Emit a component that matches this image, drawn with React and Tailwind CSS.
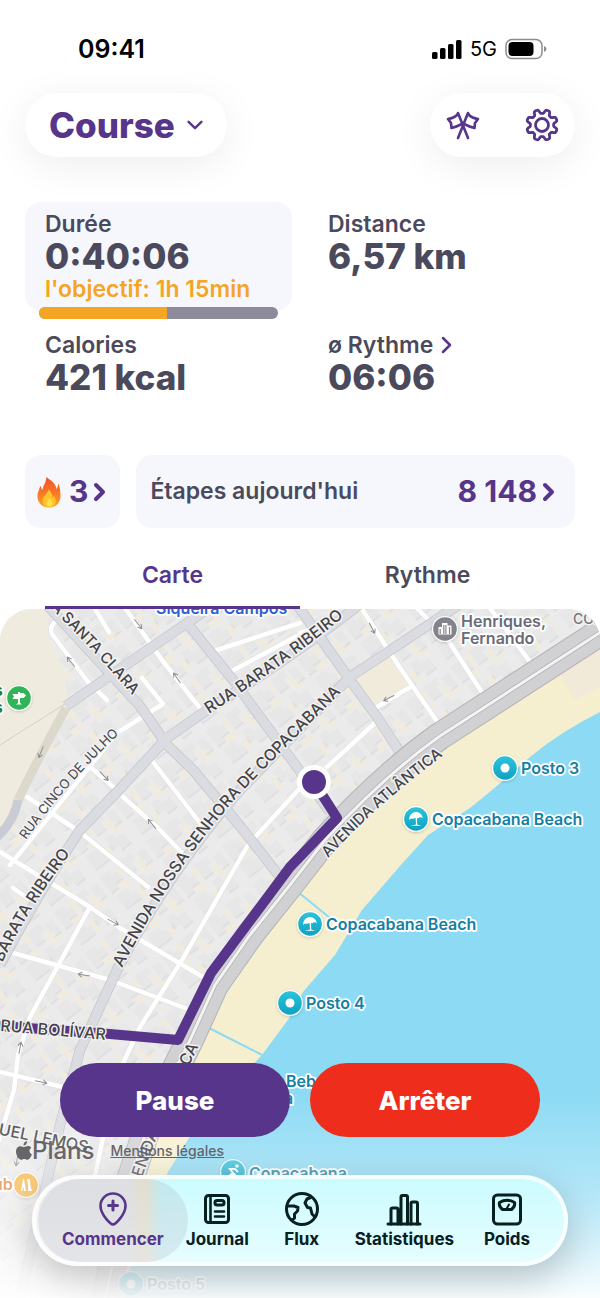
import { useState } from "react";

const STATUS_BARS = [7, 11, 15, 19];

const NAV_ITEMS = [
  { id: "start", label: "Commencer", Icon: PinIcon },
  { id: "journal", label: "Journal", Icon: JournalIcon },
  { id: "feed", label: "Flux", Icon: GlobeIcon },
  { id: "stats", label: "Statistiques", Icon: ChartIcon },
  { id: "weight", label: "Poids", Icon: ScaleIcon },
];

const MAIN_ROADS = [
  "M66 706 L187 623 L215 604",
  "M187 623 L233 680 L297 767 L330 812",
  "M360 604 Q300 652 207 710 L167 738 L117 792 L80 830 Q40 890 0 965",
  "M48 606 L140 706 L167 745 L193 770 L240 826 L280 877",
  "M460 604 L350 677 L240 790 Q170 870 117 970 L80 1050 L60 1125 L20 1298",
  "M298 606 L350 680 L377 717 L405 760",
];

const SIDE_ROADS = [
  "M92 604 L109 632",
  "M125 608 L162 660 L203 712",
  "M62 618 Q48 624 52 634 L88 682 L107 700",
  "M142 678 L163 704 L117 733 L10 865",
  "M300 623 L217 650",
  "M300 633 L310 629 L232 671",
  "M153 762 L200 823",
  "M123 797 L157 827 L182 853",
  "M90 767 L117 790",
  "M27 797 L80 832 L148 887",
  "M360 606 L400 668 L443 730",
  "M413 604 L448 640 L483 694",
  "M487 604 L530 662",
  "M412 686 L372 710",
  "M375 723 L327 767",
  "M300 788 L248 845 L182 960 L140 1027 L115 1080 L90 1200",
  "M0 852 L90 907 L120 928 L203 977",
  "M13 953 L110 980 L185 1008",
  "M90 907 L30 1017 L18 1055 L14 1090 L-4 1150",
  "M0 1072 L63 1087 L120 1098",
  "M13 888 L30 900",
];

const ARROWS = [
  [71, 662, -128], [138, 624, 52], [177, 678, -125], [372, 628, 62], [389, 698, 153],
  [41, 752, 112], [104, 776, 48], [152, 824, -130], [113, 922, 28], [84, 975, 190], [20, 1048, -80], [41, 1082, 12], [17, 1160, 100],
];

const ATLANTICA = "M610 626 L440 736 Q385 775 325 840 L290 885 L250 935 L215 985 L190 1040 L150 1120 L130 1180 L105 1300";

const STREET_LABELS = [
  { id: "santa", d: "M46 604 Q95 650 150 716", text: "A SANTA CLARA", size: 15, offset: 6 },
  { id: "barata", d: "M209 714 Q290 662 362 602", text: "RUA BARATA RIBEIRO", size: 16, offset: 0 },
  { id: "nossa", d: "M122 968 Q175 865 240 794 Q290 742 366 668", text: "AVENIDA NOSSA SENHORA DE COPACABANA", size: 16, offset: 0 },
  { id: "julho", d: "M26 840 Q70 778 136 718", text: "RUA CINCO DE JULHO", size: 13, offset: 0 },
  { id: "barata2", d: "M-18 1010 Q20 910 90 830", text: "RUA BARATA RIBEIRO", size: 16, offset: 14 },
  { id: "atl", d: "M328 858 Q382 798 470 736", text: "AVENIDA ATLÂNTICA", size: 15, offset: 0 },
  { id: "atl2", d: "M134 1204 Q158 1120 216 1014", text: "AVENIDA ATLÂNTICA", size: 16, offset: 6 },
  { id: "bolivar", d: "M0 1031 L130 1042", text: "RUA BOLÍVAR", size: 16, offset: 0 },
  { id: "lemos", d: "M-36 1128 Q40 1142 120 1160", text: "MIGUEL LEMOS", size: 16, offset: 4 },
];

// Eight rounded teeth, with a notch at the top.
const GEAR_PATH = Array.from({ length: 121 }, (_, i) => {
  const a = (i / 120) * Math.PI * 2;
  const r = 13.6 + 2 * Math.tanh(2.2 * -Math.cos(8 * a));
  const x = (18 + r * Math.sin(a)).toFixed(2);
  const y = (18 - r * Math.cos(a)).toFixed(2);
  return `${i ? "L" : "M"}${x} ${y}`;
}).join(" ") + "Z";

function Chevron({ className, dir = "right", width = 3 }) {
  return (
    <svg viewBox={dir === "down" ? "0 0 20 20" : "2 0 16 20"} className={className} fill="none" stroke="currentColor" strokeWidth={width} strokeLinecap="round" strokeLinejoin="round" aria-hidden="true">
      <path d={dir === "down" ? "M2 6 L10 14 L18 6" : "M6 3 L13 10 L6 17"} />
    </svg>
  );
}

function FlagsIcon() {
  return (
    <svg viewBox="0 0 36 32" className="h-8 w-9" fill="none" stroke="currentColor" strokeWidth="2.6" strokeLinecap="round" strokeLinejoin="round" aria-hidden="true">
      <path d="M23 29 L13 4 L12 6 Q9 9 3 10 L6 14 L6.500 19 Q11 18 17 15" />
      <path d="M13 29 L23 4 L24 6 Q27 9 33 10 L30 14 L29.500 19 Q25 18 19 15" />
    </svg>
  );
}

function GearIcon() {
  return (
    <svg viewBox="0 0 36 36" className="h-9 w-9" fill="none" stroke="currentColor" strokeWidth="2.800" strokeLinejoin="round" aria-hidden="true">
      <path d={GEAR_PATH} />
      <circle cx="18" cy="18" r="6.500" />
    </svg>
  );
}

function FlameIcon() {
  return (
    <svg viewBox="0 0 24 32" className="h-8 w-6" aria-hidden="true">
      <defs>
        <linearGradient id="flame" x1="0" y1="0" x2="0" y2="1">
          <stop offset="0" stopColor="#f4502a" />
          <stop offset="0.55" stopColor="#f97a26" />
          <stop offset="1" stopColor="#fba62a" />
        </linearGradient>
      </defs>
      <path fill="url(#flame)" d="M9.500 1 C9 5 8 7.500 6.500 10 C6 12 5.500 13 5 14 C4.500 12 3.800 10.500 3 9.800 C3 13 .5 15.500 .5 20.500 C.5 27 5.500 31.500 12 31.500 C18.500 31.500 23.500 27 23.500 20 C23.500 14 22.500 10.500 21.500 7.500 C21 10 20.500 11.500 19.500 13 C18.500 6.500 14 5 9.500 1Z" />
      <path fill="#fdc52c" d="M11.500 13.500 C11.500 17 7 18.500 6 23 C4.800 28 8 31 12.200 31 C17 31 19.500 27.500 18.500 23.500 C18 21.500 17.500 21 17.200 19.500 C16.500 20.500 16.200 21.500 15.500 22 C15.500 18.500 14 15.500 11.500 13.500Z" />
      <path fill="#fde24a" d="M12.500 22 C11.500 24.500 9.500 25 9.500 27.500 C9.500 29.500 10.800 30.500 12.500 30.500 C14.500 30.500 15.500 29 15.200 27 C15 25 13.500 24 12.500 22Z" />
    </svg>
  );
}

function NavSvg({ children }) {
  return (
    <svg viewBox="0 0 36 36" className="h-9 w-9" fill="none" stroke="currentColor" strokeWidth="3" strokeLinecap="round" strokeLinejoin="round" aria-hidden="true">
      {children}
    </svg>
  );
}

function PinIcon() {
  return (
    <NavSvg>
      <path strokeWidth="2.600" d="M18 33.500 C16 33.500 5.500 24 5.500 14.800 A12.500 12.300 0 0 1 30.500 14.800 C30.500 24 20 33.500 18 33.500Z" />
      <path d="M18 10 V19 M13.500 14.500 H22.500" />
    </NavSvg>
  );
}

function JournalIcon() {
  return (
    <NavSvg>
      <rect x="6.500" y="4.500" width="23" height="27" rx="3" />
      <path strokeWidth="2.600" d="M11.500 5 V31" />
      <rect x="16" y="9.500" width="9" height="4.500" rx="2" />
      <path strokeWidth="2.600" d="M16 20.500 H25 M16 25.500 H25" />
    </NavSvg>
  );
}

function GlobeIcon() {
  return (
    <NavSvg>
      <circle cx="18" cy="18" r="15.500" />
      <path d="M3.500 15 H10 L14 16.500 L13.500 20 L10.500 23 L10.500 27 L8 29" />
      <path d="M26.500 6.500 L23 8 L21 12 L23.500 16.500 L26.500 17 L28 23 L30.500 25.500" />
    </NavSvg>
  );
}

function ChartIcon() {
  return (
    <NavSvg>
      <path d="M2 33 H34" />
      <path d="M5 33 V18.500 Q5 17 6.500 17 H10.500 Q12 17 12 18.500 V33 M15 33 V6 Q15 4.500 16.500 4.500 H20 Q21.500 4.500 21.500 6 V33 M25 33 V12.500 Q25 11 26.500 11 H30 Q31.500 11 31.500 12.500 V33" />
    </NavSvg>
  );
}

function ScaleIcon() {
  return (
    <NavSvg>
      <rect x="4.500" y="4" width="27" height="29" rx="4" />
      <path d="M13.500 18.500 Q9.500 15 10.500 11.500 Q18 7 25.500 11.500 Q26.500 15 22.500 18.500Z" />
      <path strokeWidth="2" d="M18 17 L20 13.500" />
    </NavSvg>
  );
}

function StatusBar() {
  return (
    <div className="flex items-center justify-between pt-[33px] pb-7 pl-[78px] pr-[53px] leading-8 text-black">
      <span className="text-[25px] font-semibold">09:41</span>
      <div className="flex items-center gap-2">
        <svg viewBox="0 0 30 20" className="h-5 w-[30px]" aria-hidden="true">
          {STATUS_BARS.map((h, i) => (
            <rect key={h} x={i * 8} y={20 - h} width="5.500" height={h} rx="1.500" />
          ))}
        </svg>
        <span className="text-xl">5G</span>
        <svg viewBox="0 0 42 22" className="h-[22px] w-[42px]" aria-hidden="true">
          <rect x="1" y="1.500" width="36" height="19" rx="6" fill="none" stroke="#8c8c8c" strokeWidth="1.500" />
          <rect x="3.500" y="4" width="25" height="14" rx="4" />
          <path d="M39 8 Q41.500 9 41.500 11 Q41.500 13 39 14Z" fill="#8c8c8c" />
        </svg>
      </div>
    </div>
  );
}

function Stat({ label, value, children }) {
  return (
    <div className="px-5 pt-2">
      <p className="text-[23px] leading-7 font-semibold">{label}</p>
      <p className="text-[35px] leading-[37px] font-extrabold">{value}</p>
      {children}
    </div>
  );
}

function UmbrellaGlyph() {
  return (
    <g fill="#fff">
      <path d="M-7 0 Q-6 -6.500 0 -7 Q6 -6.500 7 0 Q4.500 -2 2.500 -.5 Q0 -2 -2.500 -.5 Q-5 -2 -7 0Z" transform="rotate(-8)" />
      <path d="M-.5 -3 L1 -3 L1.200 5.500 L5.500 6.800 H-5.500 L0 5.500Z" />
    </g>
  );
}

function Pin({ x, y, fill = "url(#pinBlue)", children }) {
  return (
    <g transform={`translate(${x} ${y})`}>
      <circle r="13" fill="#fff" fillOpacity="0.9" filter="url(#soft)" />
      <circle r="11.800" fill={fill} />
      {children}
    </g>
  );
}

function RouteMap() {
  return (
    <svg viewBox="0 609 600 689" preserveAspectRatio="xMidYMin slice" className="absolute inset-0 h-full w-full" role="img" aria-label="Carte du parcours">
      <defs>
        <linearGradient id="pinBlue" x1="0" y1="0" x2="0" y2="1">
          <stop offset="0" stopColor="#2cc3dc" />
          <stop offset="1" stopColor="#0ea2c2" />
        </linearGradient>
        <filter id="soft" x="-40%" y="-40%" width="180%" height="180%">
          <feDropShadow dx="0" dy="1" stdDeviation="1.500" floodOpacity="0.2" />
        </filter>
        <pattern id="blocks" width="58" height="50" patternUnits="userSpaceOnUse" patternTransform="rotate(-38)">
          <path fill="#e7e7e8" d="M2 3 h12 v5 h6 v10 h-9 v5 h-9Z M26 2 h16 v8 h-5 v9 h-11Z M46 6 h9 v16 h-6 v-5 h-3Z M4 28 h14 v7 h5 v10 h-19Z M30 26 h9 v6 h10 v13 h-12 v-5 h-7Z" />
          <path fill="#f0ebdd" d="M20 3 h5 v11 h-5Z M12 20 h12 v6 h-12Z M40 12 h5 v10 h8 v4 h-13Z M24 33 h5 v12 h-5Z" />
          <path fill="none" stroke="#cfcfd2" strokeWidth="0.700" d="M2 23 h9 M11 18 h9 M26 19 h11 M46 22 h9 M4 45 h19 M37 45 h12 M30 40 v-6" />
        </pattern>
      </defs>

      {/* Land, park and buildings */}
      <rect y="560" width="600" height="800" fill="#ebebeb" />
      <rect y="560" width="600" height="800" fill="url(#blocks)" />
      <path fill="#efecdf" d="M0 600 H52 L46 630 L64 672 L68 702 L18 806 L0 830Z" />
      <path fill="none" stroke="#d5d0c0" strokeWidth="1" d="M0 745 L68 702" />
      <path fill="none" stroke="#dcd9cc" strokeWidth="9" d="M66 708 Q40 755 18 800" />
      <path fill="none" stroke="#c9ccd4" strokeWidth="9" d="M18 800 Q14 822 -4 838" />
      <path fill="#f0ebda" d="M352 681 L391 656 L410 685 L374 706Z" />

      {/* Streets */}
      <g fill="none" strokeLinejoin="round">
        <g stroke="#dfdfe2" strokeWidth="5.500">
          {SIDE_ROADS.map((d) => <path key={d} d={d} />)}
        </g>
        <g stroke="#ffffff" strokeWidth="4.500" strokeLinecap="round">
          {SIDE_ROADS.map((d) => <path key={d} d={d} />)}
        </g>
        <g stroke="#c3c5cb" strokeWidth="10.500">
          {MAIN_ROADS.map((d) => <path key={d} d={d} />)}
        </g>
        <g stroke="#dadce1" strokeWidth="9">
          {MAIN_ROADS.map((d) => <path key={d} d={d} />)}
        </g>
        <g stroke="#8e8e92" strokeWidth="1">
          {ARROWS.map(([x, y, a]) => (
            <path key={`${x}-${y}`} transform={`translate(${x} ${y}) rotate(${a})`} d="M-6 0 H6 M2 -2.500 L6 0 L2 2.500" />
          ))}
        </g>
      </g>

      {/* Beach and sea */}
      <path fill="#f6efcf" d="M610 634 L447 743 L385 795 L300 890 L227 993 L200 1047 L150 1130 L128 1200 L108 1300 H610Z" />
      <path fill="#f1ead9" d="M610 636 L545 675 L558 672 L575 700 L610 682Z" />
      <path fill="#8cdaf4" d="M610 706 L600 712 Q560 732 530 757 Q500 784 470 808 L428 835 L400 866 L362 910 L335 955 L303 992 L290 1017 L262 1055 L200 1120 L168 1172 Q155 1195 150 1225 Q128 1260 124 1300 H610Z" />
      <path stroke="#8cdaf4" strokeWidth="2" d="M298 892 L330 918 M209 1028 L262 1055" />
      <path d={ATLANTICA} fill="none" stroke="#b3b3b6" strokeWidth="28" />
      <path d={ATLANTICA} fill="none" stroke="#d1d1d4" strokeWidth="26" />
      <path d={ATLANTICA} fill="none" stroke="#b3b3b6" strokeWidth="4.500" />
      <path d={ATLANTICA} fill="none" stroke="#f3f3f3" strokeWidth="3" />

      {/* Recorded route */}
      <path d="M0 1026 L110 1034 L178 1040 L211 973 L290 867 L337 818 L314 782" fill="none" stroke="#56358a" strokeWidth="10" strokeLinejoin="round" />
      <circle cx="314" cy="782" r="17" fill="#fff" />
      <circle cx="314" cy="782" r="12" fill="#56358a" />

      {/* Street names */}
      <g fill="#444448" stroke="#f2f2f2" strokeWidth="3" strokeLinejoin="round" paintOrder="stroke">
        {STREET_LABELS.map((s) => (
          <g key={s.id}>
            <path id={`street-${s.id}`} d={s.d} fill="none" stroke="none" />
            <text fontSize={s.size} fontWeight={s.size < 14 ? 400 : 500}>
              <textPath href={`#street-${s.id}`} startOffset={s.offset}>{s.text}</textPath>
            </text>
          </g>
        ))}
        <text x="573" y="624" fontSize="14" fontWeight="500" fill="#77777b">CO.</text>
      </g>

      {/* Places */}
      <Pin x={505} y={768}><circle r="4.500" fill="#fff" /></Pin>
      <Pin x={416} y={819}><UmbrellaGlyph /></Pin>
      <Pin x={310} y={924}><UmbrellaGlyph /></Pin>
      <Pin x={290} y={1003}><circle r="4.500" fill="#fff" /></Pin>
      <Pin x={131} y={1284}><circle r="4.500" fill="#fff" /></Pin>
      <Pin x={233} y={1172}>
        <path d="M-5 5 L0 1 L-3 -3 L2 -3 L5 0 M0 1 L4 5" stroke="#fff" strokeWidth="2" fill="none" />
        <circle cx="4" cy="-6" r="1.800" fill="#fff" />
      </Pin>
      <Pin x={19} y={698} fill="#2fb457">
        <path fill="#fff" d="M-6.500 -4 H-1 V-6 H1 V-5 H4.500 L7 -2.500 L4.500 0 H1 V5 L3 6.500 H-3 L-1 5 V1 H-6.500 L-5 -1.500Z" />
      </Pin>
      <Pin x={445} y={629} fill="#83838c">
        <path fill="#fff" d="M-6.500 5.500 V-2 H-3 V-6 H2.500 V-3.500 H6.500 V5.500Z" />
        <path stroke="#83838c" strokeWidth="1.200" d="M-1.200 -4 V5 M.9 -4 V5 M4.500 -2 V5 M-4.800 0 V5" />
      </Pin>
      <Pin x={26} y={1185} fill="#f6b53f">
        <path fill="#fff" d="M-5 6 L-3 -6 H-2 L0 6 H-2 L-2.500 2 L-3.500 6Z M2 6 V0 L1 -6 H4 L4.500 0 L6 6Z" />
      </Pin>
      <g fontSize="16" fontWeight="600" fill="#1380a5" stroke="#ffffff" strokeWidth="3.500" strokeLinejoin="round" paintOrder="stroke">
        <text x="521" y="774">Posto 3</text>
        <text x="432" y="825">Copacabana Beach</text>
        <text x="326" y="930">Copacabana Beach</text>
        <text x="306" y="1009">Posto 4</text>
        <text x="147" y="1290">Posto 5</text>
        <text x="249" y="1179">Copacabana</text>
        <text x="286" y="1087">Beb</text>
        <text x="284" y="1104">a</text>
        <text x="156" y="614" fill="#2962d4">Siqueira Campos</text>
        <text x="461" y="627" fill="#6a6a78">Henriques,</text>
        <text x="461" y="644" fill="#6a6a78">Fernando</text>
        <text x="-6" y="696" fill="#137a3c">s</text>
        <text x="-6" y="713" fill="#137a3c">s</text>
        <text x="-7" y="1190" fill="#dd8134">ub</text>
      </g>
    </svg>
  );
}

export default function App() {
  const [tab, setTab] = useState("Carte");
  const [active, setActive] = useState("start");

  return (
    <div className="flex min-h-screen flex-col bg-white font-[Inter,sans-serif] text-[#4b4a5c]">
      <StatusBar />

      <header className="flex items-center justify-between px-[25px] text-[#56358a]">
        <button className="flex h-16 items-center gap-3 rounded-full bg-white px-6 text-[35px] font-extrabold shadow-[0_8px_40px_rgba(0,0,0,0.07)]">
          Course
          <Chevron dir="down" className="h-4 w-4" />
        </button>
        <div className="flex h-16 items-center gap-[43px] rounded-full bg-white px-[15px] shadow-[0_8px_40px_rgba(0,0,0,0.07)]">
          <button aria-label="Objectifs"><FlagsIcon /></button>
          <button aria-label="Réglages"><GearIcon /></button>
        </div>
      </header>

      <main className="flex flex-1 flex-col">
        <section className="mt-[45px] grid grid-cols-2 gap-x-4 gap-y-3 px-[25px]">
          <div className="relative rounded-2xl bg-[#f5f7fc] pb-2">
            <Stat label="Durée" value="0:40:06">
              <p className="text-[23px] leading-7 font-semibold text-[#f5a524]">l'objectif: 1h 15min</p>
            </Stat>
            <div className="absolute inset-x-[14px] -bottom-2 h-3 overflow-hidden rounded-full bg-[#8d8a99]">
              <div className="h-full bg-[#f5a524]" style={{ width: `${(40.1 / 75) * 100}%` }} />
            </div>
          </div>
          <Stat label="Distance" value="6,57 km" />
          <Stat label="Calories" value="421 kcal" />
          <Stat
            label={
              <a href="#rythme" className="inline-flex items-center gap-1.5">
                ø Rythme
                <Chevron className="h-5 w-4 text-[#56358a]" width={2.5} />
              </a>
            }
            value="06:06"
          />
        </section>

        <section className="mt-[59px] flex gap-4 px-[25px] text-[#56358a]">
          <button className="flex h-[73px] items-center gap-1 rounded-2xl bg-[#f5f7fc] px-3 text-[30px] font-bold">
            <FlameIcon />
            <span className="ml-1">3</span>
            <Chevron className="h-5 w-4" width={4} />
          </button>
          <button className="flex h-[73px] flex-1 items-center rounded-2xl bg-[#f5f7fc] pr-[18px] pl-[14px] text-[30px] font-bold">
            <span className="flex-1 text-left text-[23px] font-semibold text-[#4b4a5c]">Étapes aujourd'hui</span>
            8 148
            <Chevron className="ml-1 h-5 w-4" width={4} />
          </button>
        </section>

        <div role="tablist" className="relative z-10 mt-[17px] flex px-[45px]">
          {["Carte", "Rythme"].map((t) => (
            <button
              key={t}
              role="tab"
              aria-selected={tab === t}
              onClick={() => setTab(t)}
              className={`h-16 flex-1 border-b-[3px] text-[23px] font-semibold ${tab === t ? "border-[#56358a] text-[#56358a]" : "border-transparent"}`}
            >
              {t}
            </button>
          ))}
        </div>

        <section className="relative flex min-h-[480px] flex-1 flex-col justify-end overflow-hidden rounded-t-[32px]">
          <RouteMap />
          <div className="absolute inset-x-0 bottom-0 h-52 bg-gradient-to-b from-white/0 via-white/35 to-white/95" />

          <div className="relative flex gap-5 px-[60px] text-[26px] font-extrabold text-white">
            <button className="h-[74px] flex-1 rounded-full bg-[#56358a]">Pause</button>
            <button className="h-[74px] flex-1 rounded-full bg-[#ee2d1c]">Arrêter</button>
          </div>

          <div className="relative mt-1 mb-[14px] flex h-5 items-center gap-4 px-4 text-[#66666a]">
            <span className="flex items-center text-2xl font-medium">
              <svg viewBox="0 0 16 20" className="h-5 w-4" fill="currentColor" aria-hidden="true">
                <path d="M11 0 C11.200 2.500 9.500 4.500 7.500 4.500 C7.300 2.300 9 .3 11 0Z M15.300 6.800 C12.800 8.200 12.900 12 15.900 13.300 C15 16 13.200 18.800 11.500 18.800 C10.200 18.800 9.800 18 8.300 18 C6.800 18 6.300 18.800 5.100 18.800 C2.900 18.800 0 14.500 0 10.600 C0 7 2.300 5.200 4.500 5.200 C6 5.200 7 6.100 8.100 6.100 C9.200 6.100 10.500 5.100 12.200 5.100 C13.300 5.100 14.600 5.700 15.300 6.800Z" />
              </svg>
              Plans
            </span>
            <a href="#legal" className="text-sm font-medium underline">Mentions légales</a>
          </div>

          <nav className="relative mx-8 mb-8 flex h-[91px] items-center justify-between rounded-full border-4 border-white/80 bg-[linear-gradient(to_bottom,rgba(255,255,255,0.1),rgba(255,255,255,0.6)),linear-gradient(to_right,#ececec_0%,#ececec_18%,#f3ebcd_21%,#c5fbff_24%,#c5fbff_100%)] bg-origin-border px-[26px] shadow-[0_12px_36px_rgba(0,0,0,0.22)]">
            {NAV_ITEMS.map(({ id, label, Icon }) => (
              <button
                key={id}
                onClick={() => setActive(id)}
                aria-current={active === id ? "page" : undefined}
                className={`flex h-[83px] min-w-[62px] flex-col items-center justify-center text-[17px] leading-6 font-bold ${active === id ? "-mx-6 rounded-full bg-gray-400/20 px-6 text-[#56358a]" : "text-[#08201f]"}`}
              >
                <Icon />
                {label}
              </button>
            ))}
          </nav>
        </section>
      </main>
    </div>
  );
}
